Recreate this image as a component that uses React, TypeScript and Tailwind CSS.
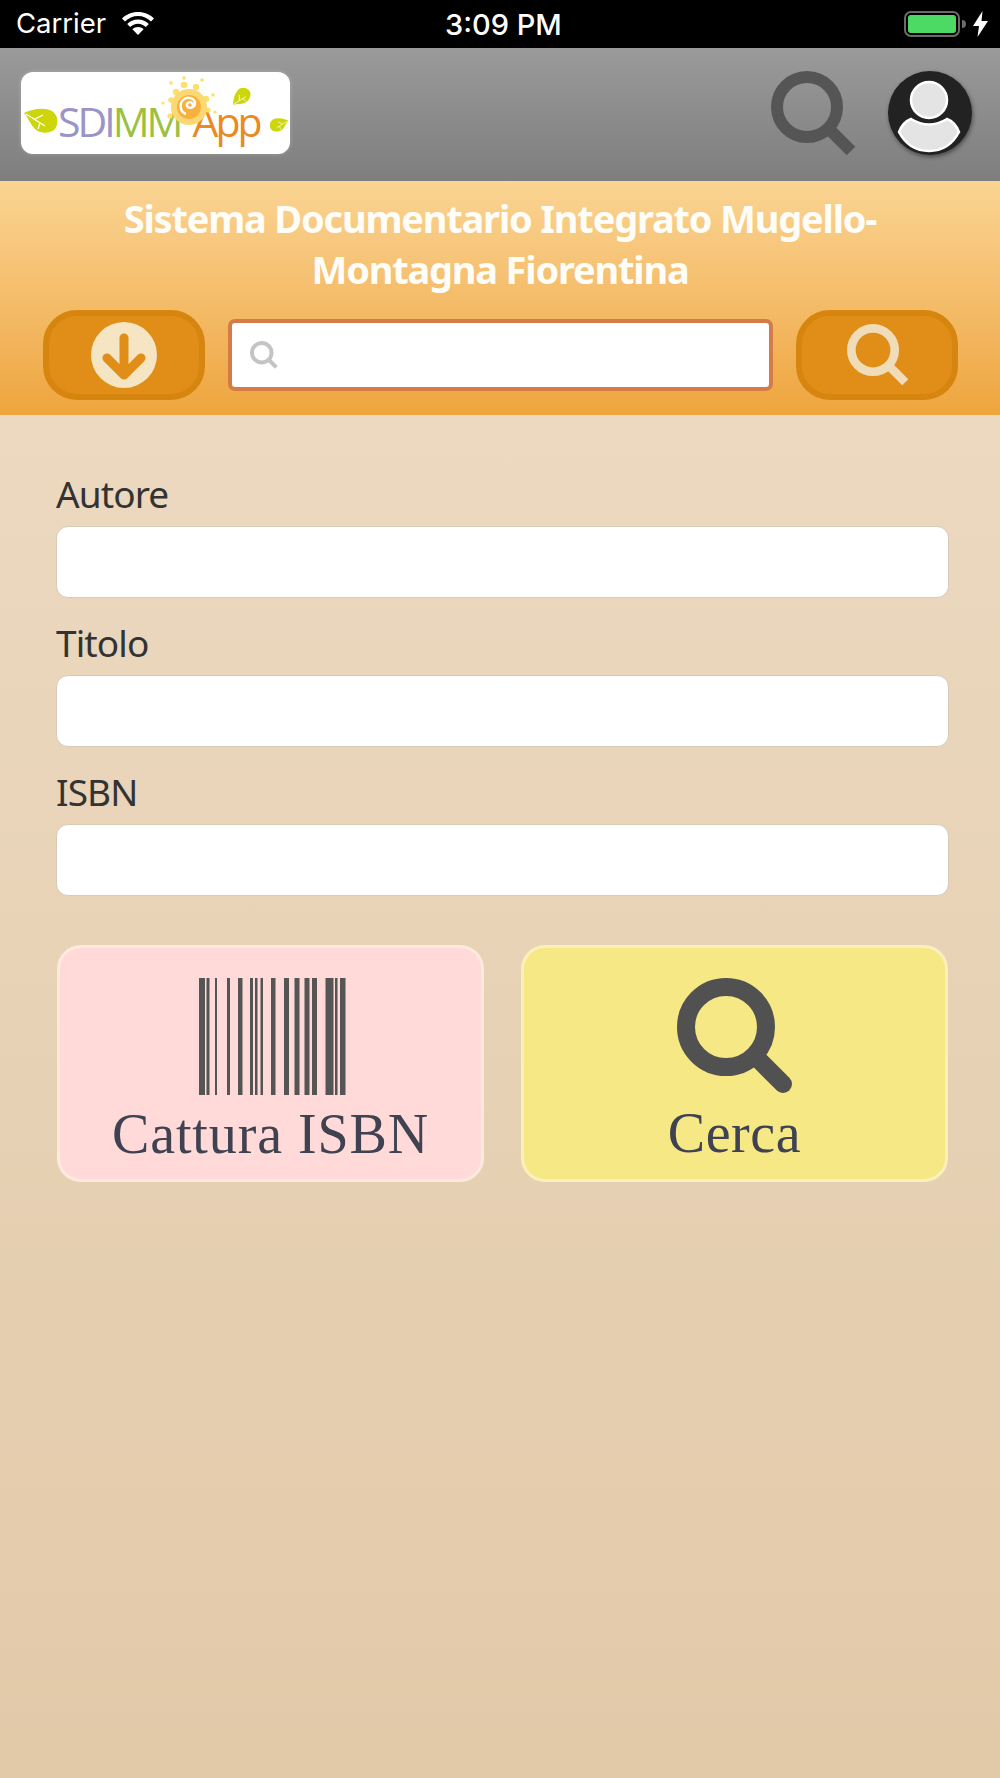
const sans = "font-['Noto_Sans','Open_Sans',sans-serif]";

const bars = [
  [0, 6], [7.5, 3], [16, 2], [28, 3], [39, 4.5], [51, 3], [56, 2.5], [61.5, 2.5],
  [72, 4.5], [85, 5], [95.5, 5], [105.5, 5], [113, 5], [126.5, 8], [136, 2.5], [141, 5.5],
];

function Leaf({ className }: { className: string }) {
  return (
    <svg viewBox="0 0 36 26" className={className}>
      <path d="M1 5C9 1 21-1 29 3c6 4 7 12 3 18-5 5-15 5-20 0C7 16 5 9 1 5z" fill="#cdd60a" />
      <path d="M3 6l19 12M12 11l8-4M17 15l-2 6" stroke="#fff" strokeWidth="1.2" fill="none" />
    </svg>
  );
}

function Logo() {
  return (
    <div className="relative flex h-[82px] w-[269px] shrink-0 items-center rounded-[12px] bg-white pl-[2px] pt-[16px] shadow-[0_0_4px_rgba(255,255,255,0.25)]">
      <Leaf className="h-[28px] w-[36px] shrink-0" />
      <div className="ml-[-1px] flex font-['Open_Sans',sans-serif] text-[41px] font-medium leading-none tracking-[-3px]">
        <span className="text-[#9b94c7]">SDI</span>
        <span className="text-[#9dbf42]">MM</span>
        <span className="ml-[12px] text-[#ea8a22]">App</span>
      </div>
      {/* sun */}
      <svg viewBox="0 0 70 60" className="absolute left-[132px] top-[3px] h-[60px] w-[70px]">
        <g fill="#fbe06a">
          <circle cx="31" cy="3" r="1.8" /><circle cx="49" cy="5" r="1.8" /><circle cx="18" cy="8" r="1.8" />
          <circle cx="31" cy="10" r="3.2" /><circle cx="43" cy="12" r="3.2" /><circle cx="23" cy="17" r="3.2" />
          <circle cx="53" cy="24" r="3.2" /><circle cx="60" cy="20" r="1.8" /><circle cx="18" cy="25" r="2.8" />
          <circle cx="10" cy="28" r="1.6" /><circle cx="17" cy="41" r="2.6" /><circle cx="55" cy="35" r="2.6" />
          <circle cx="62" cy="37" r="1.6" />
        </g>
        <circle cx="36" cy="32" r="18" fill="#fbd873" />
        <circle cx="36" cy="32" r="12" fill="#f9b03d" />
        <path d="M38 33a3 3 0 1 0-4-2c2 3 8 2 8-3s-8-7-12-3-3 12 3 14" fill="none" stroke="#fff" strokeWidth="2.4" />
      </svg>
      <Leaf className="absolute left-[210px] top-[17px] h-[17px] w-[22px] rotate-[-65deg]" />
      <Leaf className="absolute right-[1px] top-[45px] h-[16px] w-[20px] scale-x-[-1]" />
    </div>
  );
}

function SearchGlyph({ className, color, weight }: { className: string; color: string; weight: number }) {
  return (
    <svg viewBox="0 0 100 100" className={className} fill="none" stroke={color}>
      <circle cx="42" cy="42" r="35" strokeWidth={weight} />
      <path d="M67 67l27 27" strokeWidth={weight} />
    </svg>
  );
}

function Field({ label }: { label: string }) {
  return (
    <div className="flex flex-col">
      <label className={`${sans} h-[57px] text-[37px] leading-[50px] text-[#333333] tracking-[-0.9px]`}>{label}</label>
      <input className="h-[72px] rounded-[12px] border border-[#d6cab8] bg-white" />
    </div>
  );
}

export default function App() {
  return (
    <div className="flex min-h-[1778px] w-[1000px] flex-col overflow-hidden">
      {/* status bar */}
      <div className="relative flex h-[48px] items-center justify-between bg-black pl-[16px] pr-[12px] font-['Inter',sans-serif] text-white">
        <div className="flex items-center gap-[15px]">
          <span className="text-[27.5px] leading-none">Carrier</span>
          <svg viewBox="0 0 34 25" className="mb-[3px] h-[25px] w-[34px]" fill="#fff">
            <path d="M17 2C10.500 2 5 4.500 1 8.500l3 3C7.500 8 12 6 17 6s9.500 2 13 5.500l3-3C29 4.500 23.500 2 17 2z" />
            <path d="M17 9.500c-4.300 0-8 1.700-10.800 4.400l3 3C11.200 15 14 13.700 17 13.700s5.800 1.300 7.800 3.200l3-3C25 11.200 21.300 9.500 17 9.500z" />
            <path d="M17 17c-2.200 0-4.100.8-5.600 2.200L17 25l5.600-5.800C21.100 17.800 19.200 17 17 17z" />
          </svg>
        </div>
        <span className="absolute left-[445px] text-[29px] font-medium leading-none">3:09 PM</span>
        <div className="flex items-center gap-[7px]">
          <div className="flex items-center">
            <div className="h-[26px] w-[56px] rounded-[7px] border-2 border-[#6b6b6b] p-[2px]">
              <div className="h-full w-full rounded-[3px] bg-[#4cd964]" />
            </div>
            <div className="ml-[2px] h-[8px] w-[4px] rounded-r-sm bg-[#6b6b6b]" />
          </div>
          <svg viewBox="0 0 15 26" className="h-[26px] w-[15px]" fill="#fff">
            <path d="M9.500 0L0 15h6L4.500 26 15 10H8.500z" />
          </svg>
        </div>
      </div>

      {/* header */}
      <div className="flex h-[133px] items-center justify-between bg-gradient-to-b from-[#9a9a9a] to-[#7e7e7e] pb-[3px] pl-[21px] pr-[27px]">
        <Logo />
        <div className="flex items-center gap-[31px]">
          <svg viewBox="0 0 85 85" className="h-[85px] w-[85px]" fill="none" stroke="#555555">
            <circle cx="36" cy="36" r="30" strokeWidth="12" />
            <path d="M58 58l22 22" strokeWidth="12" />
          </svg>
          <svg viewBox="0 0 86 86" className="h-[86px] w-[86px] drop-shadow-[1px_2px_2px_rgba(0,0,0,0.45)]">
            <circle cx="43" cy="43" r="42" fill="#222222" />
            <circle cx="42" cy="30" r="18" fill="#e4e4e4" stroke="#fff" strokeWidth="2.500" />
            <path d="M12 62Q16 52 24 49Q42 60 60 49Q68 52 72 62Q62 81 42 81Q22 81 12 62Z" fill="#e4e4e4" stroke="#fff" strokeWidth="2.500" />
          </svg>
        </div>
      </div>

      {/* title and quick search */}
      <div className="flex h-[234px] flex-col bg-gradient-to-b from-[#fad492] to-[#eea53b]">
        <h1 className="mt-[12px] h-[102px] text-center font-['Noto_Sans','Open_Sans',sans-serif] text-[38px] font-bold leading-[51px] tracking-[-1.2px] text-[#fffdf8]">
          Sistema Documentario Integrato Mugello-
          <br />
          Montagna Fiorentina
        </h1>
        <div className="mt-[15px] flex items-center pl-[43px] pr-[42px]">
          <button className="flex h-[90px] w-[162px] items-center justify-center rounded-[34px] border-[6px] border-[#d6860e] bg-[#e08e17]">
            <svg viewBox="0 0 66 66" className="h-[66px] w-[66px]">
              <circle cx="33" cy="33" r="33" fill="#f5e5c3" />
              <path d="M33 16v34M16 36l17 17 17-17" fill="none" stroke="#e08e17" strokeWidth="9" strokeLinejoin="round" strokeLinecap="round" />
            </svg>
          </button>
          <div className="mx-[23px] flex h-[72px] flex-1 items-center rounded-[7px] border-[4px] border-[#d47b47] bg-white pl-[18px]">
            <SearchGlyph className="h-[28px] w-[28px]" color="#c4c4c4" weight={14} />
          </div>
          <button className="flex h-[90px] w-[162px] items-center justify-center rounded-[34px] border-[6px] border-[#d6860e] bg-[#e08e17]">
            <SearchGlyph className="ml-[2px] h-[62px] w-[62px]" color="#f0dcb8" weight={14} />
          </button>
        </div>
      </div>

      {/* form */}
      <div className="flex flex-1 flex-col bg-gradient-to-b from-[#ecd9c0] to-[#e2c9a8] px-[56px] pt-[54px] pr-[51px]">
        <div className="flex flex-col gap-[20px]">
          <Field label="Autore" />
          <Field label="Titolo" />
          <Field label="ISBN" />
        </div>
        <div className="mt-[49px] flex gap-[37px] pl-[1px] pr-[1px]">
          <button className="flex h-[237px] w-[427px] flex-col items-center rounded-[24px] border-[3px] border-[#fdeade] bg-[#ffdad9] pt-[30px]">
            <svg viewBox="0 0 147 117" className="ml-[4px] h-[117px] w-[147px]" fill="#555555">
              {bars.map(([x, w]) => (
                <rect key={x} x={x} y="0" width={w} height="117" />
              ))}
            </svg>
            <span className="mt-[7px] font-['Liberation_Serif',serif] text-[56px] leading-[64px] tracking-[0.9px] text-[#3f4250]">Cattura ISBN</span>
          </button>
          <button className="flex h-[237px] w-[427px] flex-col items-center rounded-[24px] border-[3px] border-[#fbf0bb] bg-[#f7e886] pt-[29px]">
            <svg viewBox="0 0 118 120" className="h-[120px] w-[118px]" fill="none" stroke="#515151" strokeLinecap="round">
              <circle cx="50" cy="50" r="40" strokeWidth="18" />
              <path d="M84 84l23 23" strokeWidth="18" />
            </svg>
            <span className="mt-[4px] font-['Liberation_Serif',serif] text-[56px] leading-[64px] tracking-[0.6px] text-[#3f4250]">Cerca</span>
          </button>
        </div>
      </div>
    </div>
  );
}
